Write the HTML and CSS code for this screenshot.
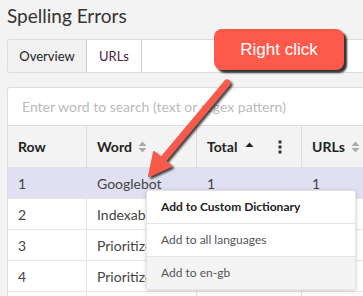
FILE: index.html
```html
<!DOCTYPE html>
<html>
<head>
<meta charset="utf-8">
<link rel="stylesheet" href="styles.css">
</head>
<body>
<div class="page">
  <h1 class="title">Spelling Errors</h1>
  <div class="tabs">
    <div class="tab tab-active">Overview</div>
    <div class="tab tab-link">URLs</div>
  </div>
  <div class="panel">
    <div class="search">Enter word to search (text or regex pattern)</div>
    <div class="grid head">
      <div class="cell">Row</div>
      <div class="cell">Word <span class="sort"><svg width="9" height="12" viewBox="0 0 9 12"><path d="M4.5 0.5L8.5 5H0.5Z M4.5 11.5L8.5 7H0.5Z" fill="#aaa"/></svg></span></div>
      <div class="cell cell-total">Total <span class="sort-up"><svg width="9" height="6" viewBox="0 0 9 6"><path d="M4.5 0.5L8.5 5H0.5Z" fill="#222"/></svg></span><span class="kebab"><svg width="4" height="14" viewBox="0 0 4 14"><rect x="0.5" y="0.5" width="3" height="3" fill="#333"/><rect x="0.5" y="5.5" width="3" height="3" fill="#333"/><rect x="0.5" y="10.5" width="3" height="3" fill="#333"/></svg></span></div>
      <div class="cell">URLs <span class="sort"><svg width="9" height="12" viewBox="0 0 9 12"><path d="M4.5 0.5L8.5 5H0.5Z M4.5 11.5L8.5 7H0.5Z" fill="#aaa"/></svg></span></div>
    </div>
    <div class="grid row row-selected">
      <div class="cell">1</div><div class="cell">Googlebot</div><div class="cell">1</div><div class="cell">1</div>
    </div>
    <div class="grid row">
      <div class="cell">2</div><div class="cell">Indexable</div><div class="cell">1</div><div class="cell">1</div>
    </div>
    <div class="grid row">
      <div class="cell">3</div><div class="cell">Prioritize</div><div class="cell">1</div><div class="cell">1</div>
    </div>
    <div class="grid row">
      <div class="cell">4</div><div class="cell">Prioritized</div><div class="cell">1</div><div class="cell">1</div>
    </div>
    <div class="grid row">
      <div class="cell"></div><div class="cell"></div><div class="cell"></div><div class="cell"></div>
    </div>
  </div>
</div>

<div class="menu">
  <div class="menu-item menu-item-strong">Add to Custom Dictionary</div>
  <div class="menu-item">Add to all languages</div>
  <div class="menu-item menu-item-hover">Add to en-gb</div>
</div>

<svg class="arrow" width="363" height="296" viewBox="0 0 363 296">
  <defs>
    <filter id="sh" x="-20%" y="-20%" width="140%" height="140%">
      <feDropShadow dx="2" dy="2" stdDeviation="1" flood-color="#222" flood-opacity="0.85"/>
    </filter>
  </defs>
  <g filter="url(#sh)">
    <line x1="227" y1="83" x2="160" y2="163" stroke="#f65a4b" stroke-width="7" stroke-linecap="round"/>
    <path d="M149 176 L154 152 L171 166 Z" fill="#f65a4b" stroke="#f65a4b" stroke-width="2" stroke-linejoin="round"/>
  </g>
</svg>

<div class="callout">Right click</div>
</body>
</html>
```
FILE: styles.css
```css
html, body {
  margin: 0;
  padding: 0;
}
body {
  background: #f3f3f3;
  width: 363px;
  height: 296px;
  overflow: hidden;
  position: relative;
  font-family: Lato, "Open Sans", sans-serif;
  color: #333;
}
.page {
  width: 400px;
  padding: 4px 0 0 7px;
}
.title {
  margin: 0;
  font-size: 19px;
  font-weight: normal;
  line-height: 24px;
  height: 35px;
  color: #333;
}
.tabs {
  display: flex;
  height: 32px;
  border: 1px solid #ddd;
  border-radius: 3px;
  background: #fff;
  font-size: 13px;
}
.tab {
  display: flex;
  align-items: center;
  justify-content: center;
  border-right: 1px solid #ccc;
}
.tab-active {
  width: 78px;
  background: #f1f1f1;
  color: #222;
  border-radius: 3px 0 0 3px;
}
.tab-link {
  width: 54px;
  color: #4b2440;
}
.panel {
  margin-top: 14px;
  background: #fff;
  border: 1px solid #ddd;
  border-radius: 3px 0 0 0;
}
.search {
  height: 37px;
  line-height: 37px;
  padding-left: 14px;
  color: #bbb;
  font-size: 14px;
  border-bottom: 1px solid #ddd;
}
.grid {
  display: grid;
  grid-template-columns: 79px 110px 105px 100px;
}
.cell {
  padding-left: 10px;
  border-right: 1px solid #e2e2e2;
  display: flex;
  align-items: center;
}
.head {
  height: 41px;
  background: #f3f3f3;
  border-bottom: 1px solid #e2e2e2;
  font-size: 14px;
  font-weight: bold;
  color: #222;
}
.head .cell {
  border-right-color: #ddd;
}
.sort {
  margin-left: 6px;
  display: flex;
}
.sort-up {
  margin-left: 8px;
  display: flex;
  margin-top: -4px;
}
.kebab {
  margin-left: 24px;
  display: flex;
}
.row {
  height: 30px;
  border-bottom: 1px solid #e6e6e6;
  font-size: 14px;
  color: #444;
}
.row-selected {
  background: #e0e0f2;
}
.menu {
  position: absolute;
  left: 146px;
  top: 190px;
  width: 208px;
  background: #fff;
  border: 1px solid #e4e4e4;
  border-radius: 3px;
  box-shadow: 0 1px 4px rgba(0,0,0,0.18);
  font-size: 12px;
  overflow: hidden;
}
.menu-item {
  height: 32px;
  line-height: 32px;
  padding-left: 14px;
  color: #555;
  border-bottom: 1px solid #e4e4e4;
}
.menu-item:last-child {
  border-bottom: none;
}
.menu-item-strong {
  color: #222;
  font-weight: bold;
}
.menu-item-hover {
  background: #f4f4f4;
}
.arrow {
  position: absolute;
  left: 0;
  top: 0;
}
.callout {
  position: absolute;
  left: 214px;
  top: 29px;
  width: 130px;
  height: 41px;
  border-radius: 8px;
  background: #fe5a4c;
  box-shadow: 3px 3px 2px rgba(30,30,30,0.9);
  color: #fff;
  font-family: "Liberation Sans", Arial, sans-serif;
  font-size: 17px;
  display: flex;
  align-items: center;
  justify-content: center;
}
```
